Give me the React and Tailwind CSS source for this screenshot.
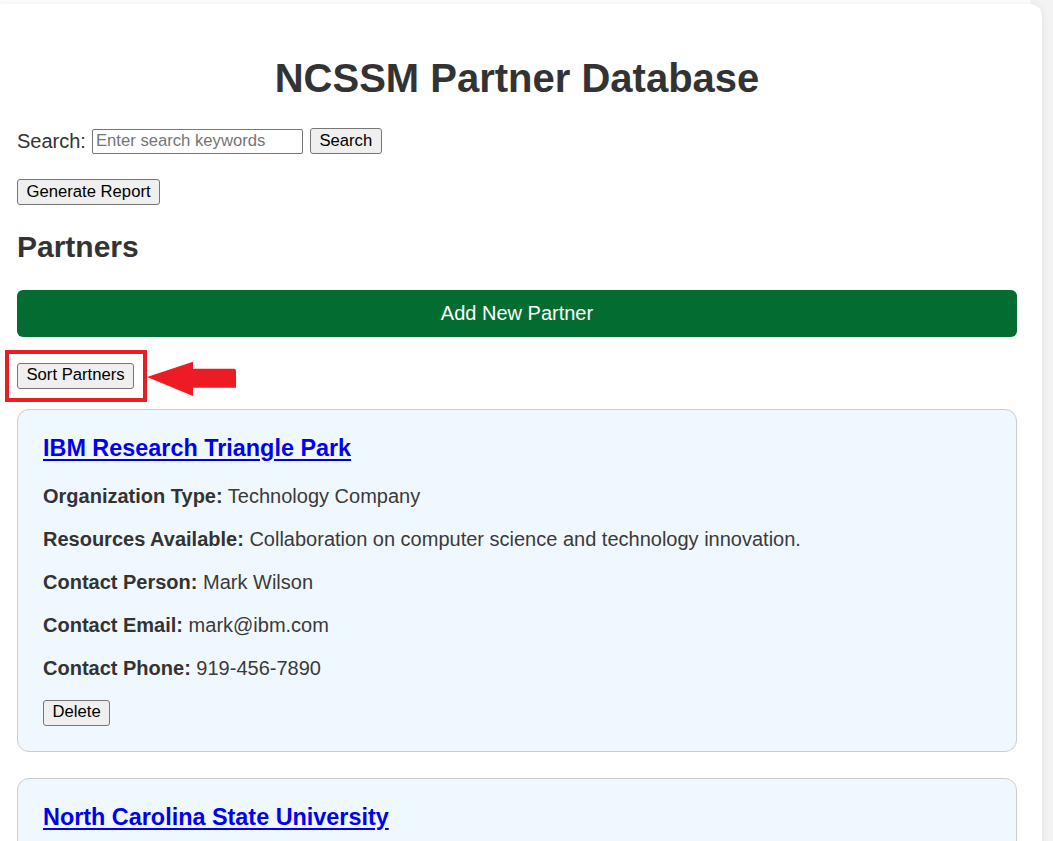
import React from "react";

const btn =
  "inline-flex items-center h-[26px] px-[8.5px] bg-[#efefef] border border-[#767676] rounded-[3px] text-[16.67px] text-black leading-none";

function Field({ label, value }) {
  return (
    <p className="text-[20px] leading-[23px] mb-[20px] text-[#3a3a3a]">
      <strong className="font-bold text-[#333]">{label}:</strong> {value}
    </p>
  );
}

function PartnerCard({ p }) {
  return (
    <div className="bg-[#f0f8ff] border border-[#ccc] rounded-[12px] p-[25px] mb-[26px]">
      <h3 className="text-[23.4px] leading-[27px] font-bold mb-[23px]">
        <a href="#" className="text-[#0000ee] underline decoration-[2px] underline-offset-[3px]">
          {p.name}
        </a>
      </h3>
      <Field label="Organization Type" value={p.type} />
      <Field label="Resources Available" value={p.resources} />
      <Field label="Contact Person" value={p.person} />
      <Field label="Contact Email" value={p.email} />
      <Field label="Contact Phone" value={p.phone} />
      <button className={btn}>Delete</button>
    </div>
  );
}

const partners = [
  {
    name: "IBM Research Triangle Park",
    type: "Technology Company",
    resources: "Collaboration on computer science and technology innovation.",
    person: "Mark Wilson",
    email: "mark@ibm.com",
    phone: "919-456-7890",
  },
  {
    name: "North Carolina State University",
    type: "University",
    resources: "Research partnerships and campus lab access.",
    person: "Sarah Lee",
    email: "sarah@ncsu.edu",
    phone: "919-123-4567",
  },
];

export default function App() {
  return (
    <div
      className="h-screen overflow-hidden bg-[linear-gradient(to_right,#ffffff_1030px,#f3f3f3_1030px)] pt-[4px]"
      style={{ fontFamily: '"Liberation Sans", Arial, sans-serif' }}
    >
      <div className="w-[1050px] ml-[-8px] bg-white rounded-[12px] shadow-[0_0_8px_rgba(0,0,0,0.08)] px-[25px] pt-[25px] pb-[25px]">
        <h1 className="text-[40px] leading-[46px] font-bold text-center text-[#333] mt-[26px] mb-[27px]">
          NCSSM Partner Database
        </h1>

        <div className="flex items-center h-[26px] text-[20px] text-[#333]">
          <span>Search:</span>
          <input
            type="text"
            placeholder="Enter search keywords"
            className="ml-[6px] w-[211px] h-[25px] border border-[#767676] rounded-[2px] px-[3px] text-[16.67px] text-black placeholder:text-[#757575] bg-white outline-none"
          />
          <button className={btn + " ml-[7px]"}>Search</button>
        </div>

        <div className="mt-[25px]">
          <button className={btn}>Generate Report</button>
        </div>

        <h2 className="text-[30px] leading-[34.5px] font-bold text-[#333] mt-[25px] mb-[25px]">
          Partners
        </h2>

        <button className="w-full h-[47px] rounded-[6px] bg-[#036d31] text-white text-[20px]">
          Add New Partner
        </button>

        <div className="relative mt-[26px] h-[26px]">
          <button className={btn}>Sort Partners</button>
          <div className="absolute left-[-12px] top-[-13px] w-[142px] h-[52px] border-[4px] border-[#e81e25] pointer-events-none" />
          <svg
            className="absolute left-[130px] top-[-2px] pointer-events-none"
            width="90"
            height="36"
            viewBox="0 0 90 36"
          >
            <path
              d="M0 16 L46 0.7 L46 7.7 L87 7.7 Q89 7.7 89 10 L89 26.7 L46 26.7 L46 35 Z"
              fill="#ed1c24"
            />
          </svg>
        </div>

        <div className="mt-[20px]">
          {partners.map((p) => (
            <PartnerCard key={p.name} p={p} />
          ))}
        </div>
      </div>
    </div>
  );
}
